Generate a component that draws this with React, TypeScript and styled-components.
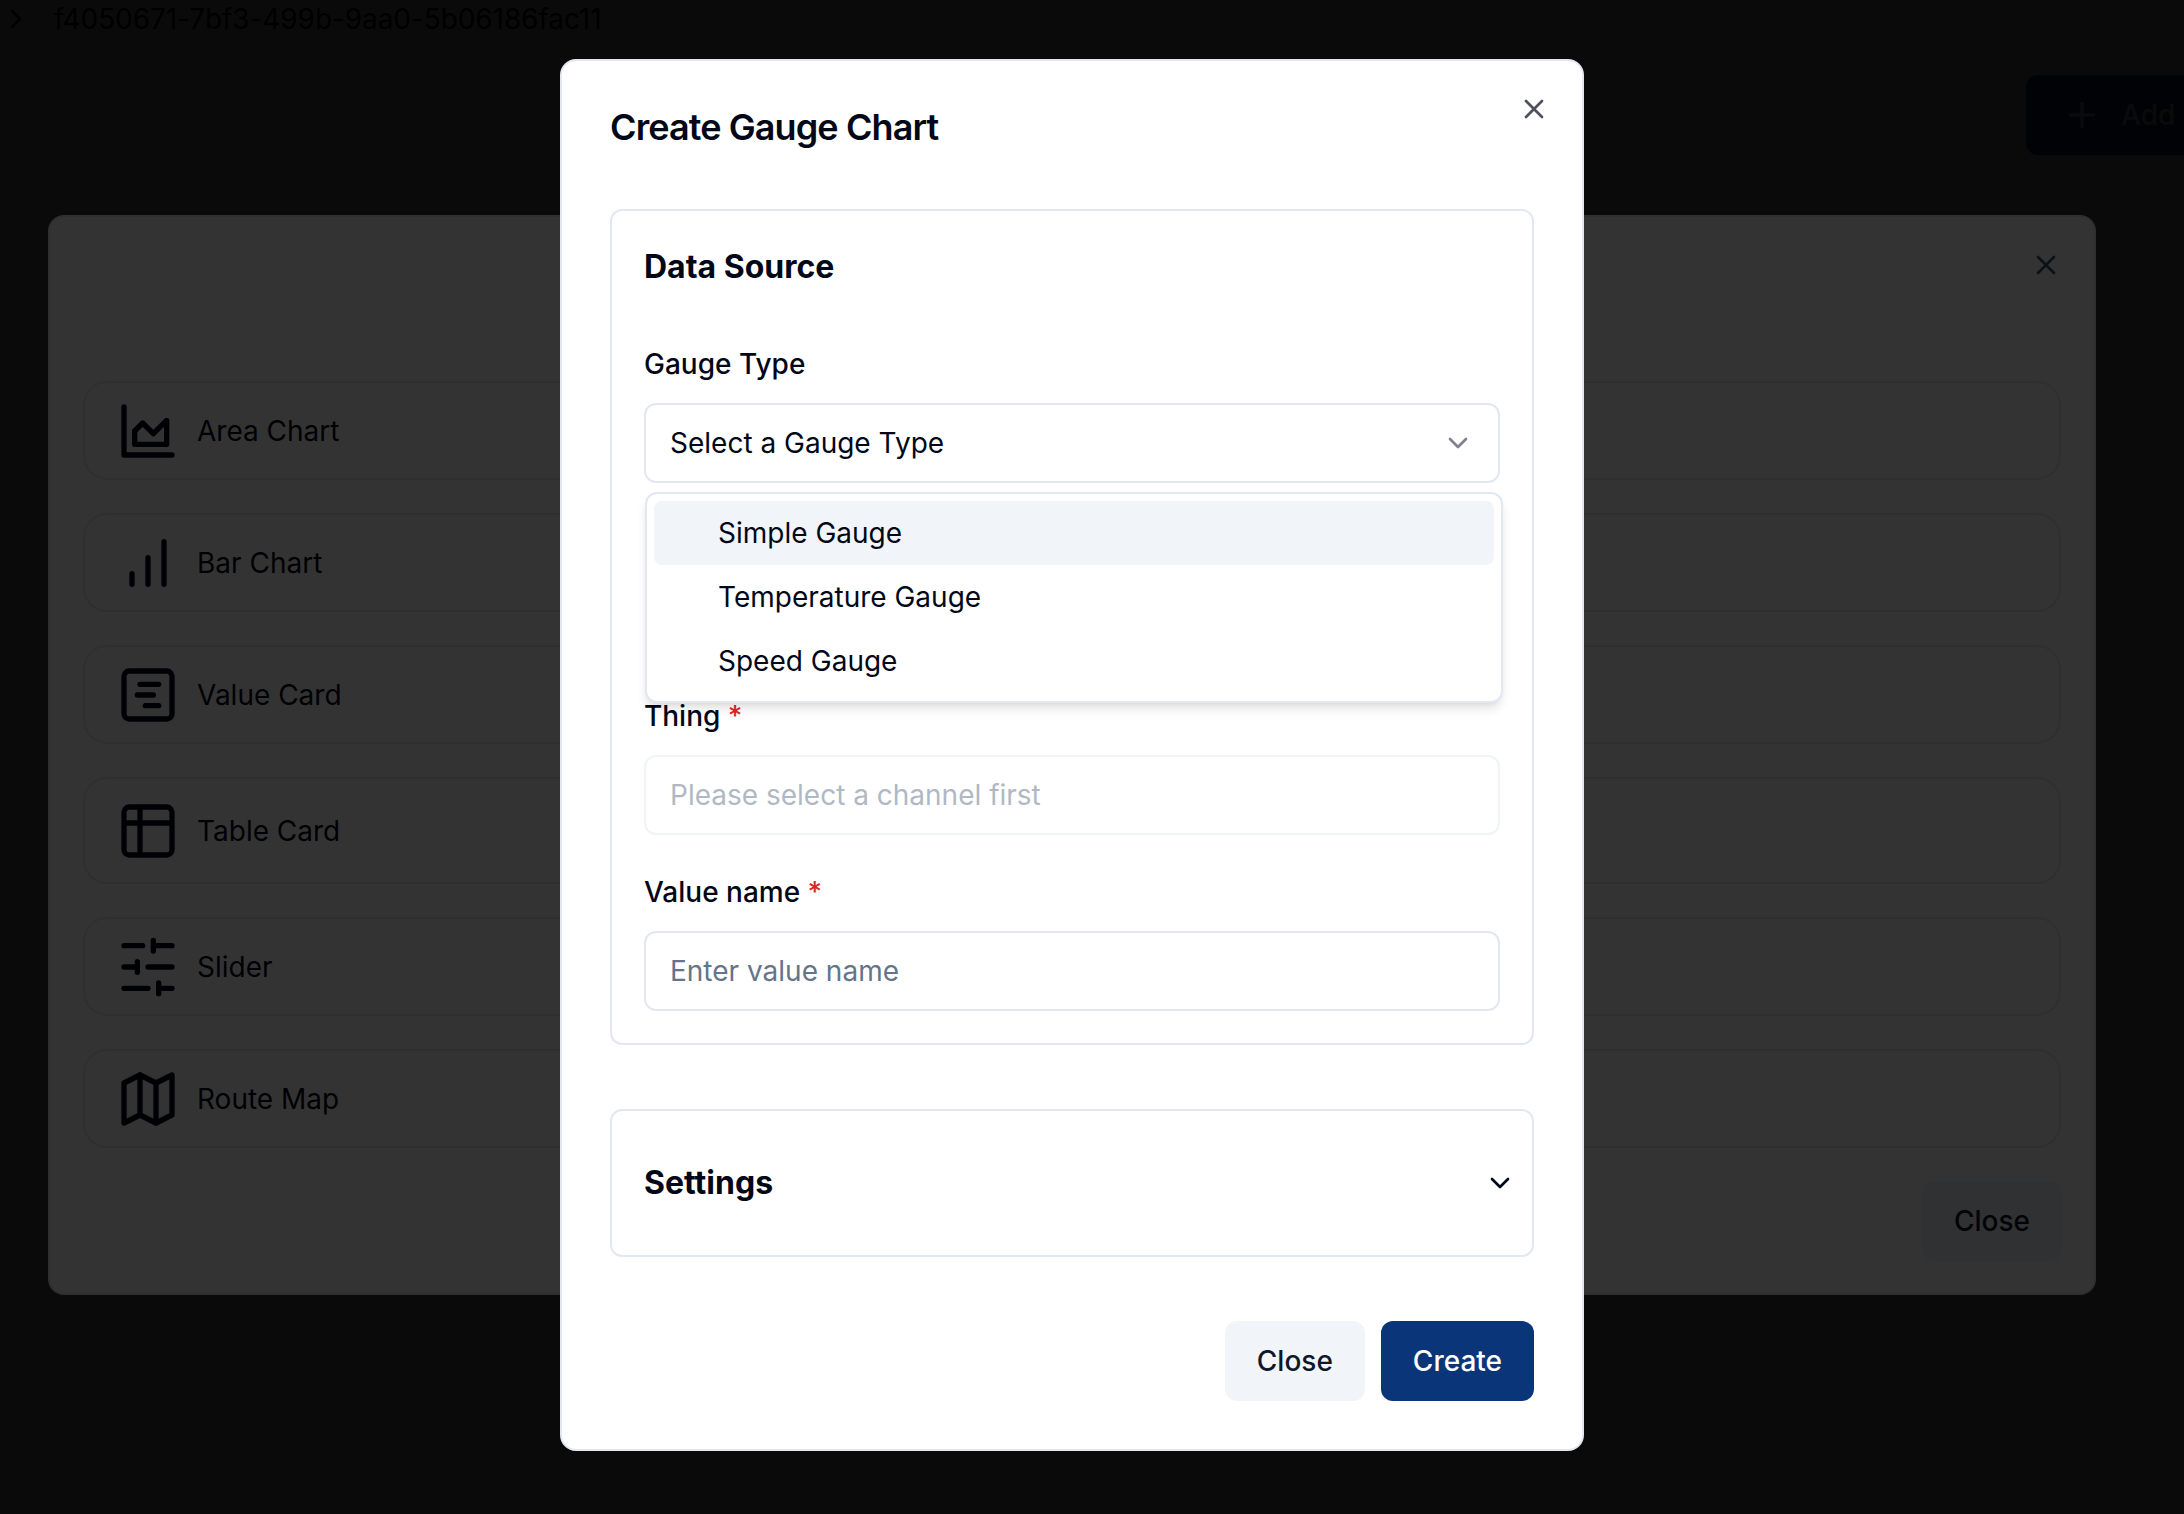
import React from 'react';
import styled, { createGlobalStyle } from 'styled-components';
import { ChevronDown, ChevronRight, Plus, SquareChartGantt, Table2, X } from 'lucide-react';

const AreaChartIcon = () => (
    <IconSvg viewBox="0 0 24 24">
        <path d="M3 3v18h18" />
        <path d="M7 12v5h12V8l-5 5-4-4Z" />
    </IconSvg>
);

const BarChartIcon = () => (
    <IconSvg viewBox="0 0 24 24">
        <path d="M12 20V10" />
        <path d="M18 20V4" />
        <path d="M6 20v-4" />
    </IconSvg>
);

const SliderIcon = () => (
    <IconSvg viewBox="0 0 24 24">
        <path d="M21 4h-7M10 4H3M21 12h-9M8 12H3M21 20h-5M12 20H3M14 2v4M8 10v4M16 18v4" />
    </IconSvg>
);

const MapIcon = () => (
    <IconSvg viewBox="0 0 24 24">
        <path d="M3 6l6-3 6 3 6-3v15l-6 3-6-3-6 3Z" />
        <path d="M9 3v15M15 6v15" />
    </IconSvg>
);

const widgets = [
    { label: 'Area Chart', icon: <AreaChartIcon /> },
    { label: 'Bar Chart', icon: <BarChartIcon /> },
    { label: 'Value Card', icon: <SquareChartGantt size={64} /> },
    { label: 'Table Card', icon: <Table2 size={64} />, tall: true },
    { label: 'Slider', icon: <SliderIcon /> },
    { label: 'Route Map', icon: <MapIcon /> },
];

const gaugeTypes = ['Simple Gauge', 'Temperature Gauge', 'Speed Gauge'];

const App = (): JSX.Element => (
    <>
        <GlobalStyle />
        <Page>
            <TopBar>
                <ChevronRight size={32} />
                <DashboardId>f4050671-7bf3-499b-9aa0-5b06186fac11</DashboardId>
            </TopBar>
            <Toolbar>
                <AddButton>
                    <Plus size={40} />
                    Add
                </AddButton>
            </Toolbar>
        </Page>

        <Backdrop />
        <DialogLayer>
            <WidgetDialog>
                <CloseIcon>
                    <X size={32} />
                </CloseIcon>
                <WidgetList>
                    {widgets.map((widget) => (
                        <WidgetRow key={widget.label} $tall={widget.tall}>
                            {widget.icon}
                            {widget.label}
                        </WidgetRow>
                    ))}
                </WidgetList>
                <WidgetFooter>
                    <SecondaryButton>Close</SecondaryButton>
                </WidgetFooter>
            </WidgetDialog>
        </DialogLayer>

        <Backdrop />
        <DialogLayer>
            <GaugeDialog>
                <CloseIcon>
                    <X size={32} />
                </CloseIcon>
                <DialogTitle>Create Gauge Chart</DialogTitle>
                <SourceCard>
                    <CardTitle>Data Source</CardTitle>
                    <Fields>
                        <Field>
                            <Label>Gauge Type</Label>
                            <SelectBox>
                                Select a Gauge Type
                                <SelectChevron size={32} />
                            </SelectBox>
                            <Dropdown>
                                {gaugeTypes.map((type, index) => (
                                    <DropdownItem key={type} $active={index === 0}>
                                        {type}
                                    </DropdownItem>
                                ))}
                            </Dropdown>
                        </Field>
                        <CoveredField />
                        <Field>
                            <Label>
                                Thing <Required>*</Required>
                            </Label>
                            <TextInput disabled placeholder="Please select a channel first" />
                        </Field>
                        <Field>
                            <Label>
                                Value name <Required>*</Required>
                            </Label>
                            <TextInput placeholder="Enter value name" />
                        </Field>
                    </Fields>
                </SourceCard>
                <SettingsCard>
                    <CardTitle>Settings</CardTitle>
                    <ChevronDown size={32} />
                </SettingsCard>
                <DialogFooter>
                    <SecondaryButton>Close</SecondaryButton>
                    <PrimaryButton>Create</PrimaryButton>
                </DialogFooter>
            </GaugeDialog>
        </DialogLayer>
    </>
);

const GlobalStyle = createGlobalStyle`
    * {
        box-sizing: border-box;
    }

    html,
    body {
        margin: 0;
        height: 100%;
        overflow: hidden;
        background: #fff;
        color: #020817;
        font-family: Inter, 'Liberation Sans', sans-serif;
    }
`;

const Page = styled.main`
    height: 100vh;
    overflow: hidden;
    background: #fff;
`;

const TopBar = styled.div`
    display: flex;
    align-items: center;
    gap: 22px;
    height: 38px;
    font-size: 28px;
    letter-spacing: -0.08px;
`;

const DashboardId = styled.span`
    white-space: nowrap;
`;

const Toolbar = styled.div`
    display: flex;
    padding: 37px 0 0 2026px;
`;

const AddButton = styled.button`
    display: flex;
    align-items: center;
    flex: none;
    gap: 19px;
    width: 240px;
    height: 80px;
    padding: 0 36px;
    border: 0;
    border-radius: 12px;
    background: #0a3679;
    color: #fff;
    font: 500 28px Inter, sans-serif;
`;

const Backdrop = styled.div`
    position: fixed;
    inset: 0;
    background: rgba(0, 0, 0, 0.8);
`;

const DialogLayer = styled.div`
    position: fixed;
    inset: 0;
    display: flex;
    align-items: center;
    justify-content: center;
    padding: 0 40px 4px 0;
`;

const Dialog = styled.section`
    position: relative;
    display: flex;
    flex-direction: column;
    padding: 48px;
    border: 2px solid #e2e8f0;
    border-radius: 16px;
    background: #fff;
`;

const WidgetDialog = styled(Dialog)`
    width: 2048px;
    height: 1080px;
    padding: 164px 33px 33px;
`;

const GaugeDialog = styled(Dialog)`
    width: 1024px;
    height: 1392px;
`;

const CloseIcon = styled.span`
    position: absolute;
    top: 32px;
    right: 32px;
    display: flex;
    color: #020817;
    opacity: 0.7;
`;

const WidgetList = styled.div`
    display: flex;
    flex-direction: column;
    gap: 33px;
`;

const WidgetRow = styled.div<{ $tall?: boolean }>`
    display: flex;
    align-items: center;
    gap: 17px;
    height: ${(props) => (props.$tall ? '107px' : '99px')};
    padding: 0 31px;
    border: 2px solid #e2e8f0;
    border-radius: 24px;
    font-size: 28px;
    line-height: 40px;
`;

const IconSvg = styled.svg`
    flex: none;
    width: 64px;
    height: 64px;
    fill: none;
    stroke: currentColor;
    stroke-width: 2;
    stroke-linecap: round;
    stroke-linejoin: round;
`;

const WidgetFooter = styled.div`
    display: flex;
    justify-content: flex-end;
    margin: auto -1px -1px 0;
`;

const DialogTitle = styled.h2`
    margin: 0 0 64px;
    font-size: 36px;
    font-weight: 600;
    line-height: 36px;
    letter-spacing: -0.9px;
`;

const Card = styled.div`
    border: 2px solid #e2e8f0;
    border-radius: 12px;
`;

const SourceCard = styled(Card)`
    padding: 32px;
`;

const SettingsCard = styled(Card)`
    display: flex;
    align-items: center;
    justify-content: space-between;
    height: 148px;
    margin-top: 64px;
    padding: 0 16px 0 32px;
`;

const CardTitle = styled.h3`
    margin: 0;
    font-size: 32px;
    font-weight: 700;
    line-height: 48px;
`;

const Fields = styled.div`
    display: flex;
    flex-direction: column;
    gap: 37px;
    margin-top: 53px;
`;

const Field = styled.div`
    position: relative;
    display: flex;
    flex-direction: column;
    gap: 19px;
`;

const CoveredField = styled.div`
    height: 139px;
`;

const Label = styled.label`
    font-size: 28px;
    font-weight: 500;
    line-height: 40px;
`;

const Required = styled.span`
    color: #dc2626;
`;

const SelectBox = styled.div`
    display: flex;
    align-items: center;
    justify-content: space-between;
    height: 80px;
    padding: 0 24px;
    border: 2px solid #e2e8f0;
    border-radius: 12px;
    font-size: 28px;
`;

const SelectChevron = styled(ChevronDown)`
    opacity: 0.5;
`;

const Dropdown = styled.div`
    position: absolute;
    top: 148px;
    left: 1px;
    z-index: 2;
    width: 858px;
    height: 211px;
    padding: 7px;
    border: 2px solid #e2e8f0;
    border-radius: 12px;
    background: #fff;
    box-shadow: 0 8px 12px -2px rgba(0, 0, 0, 0.1), 0 3px 6px -3px rgba(0, 0, 0, 0.1);
`;

const DropdownItem = styled.div<{ $active?: boolean }>`
    height: 64px;
    padding-left: 64px;
    border-radius: 8px;
    background: ${(props) => (props.$active ? '#f1f5f9' : 'transparent')};
    font-size: 28px;
    line-height: 64px;
`;

const TextInput = styled.input`
    width: 100%;
    height: 80px;
    padding: 0 24px;
    border: 2px solid #e2e8f0;
    border-radius: 12px;
    background: #fff;
    color: #020817;
    font: 400 28px Inter, sans-serif;

    &::placeholder {
        color: #64748b;
    }

    &:disabled {
        opacity: 0.5;
    }
`;

const DialogFooter = styled.div`
    display: flex;
    justify-content: flex-end;
    gap: 16px;
    margin-top: auto;
`;

const Button = styled.button`
    height: 80px;
    padding: 0 32px;
    border: 0;
    border-radius: 12px;
    font: 500 28px Inter, sans-serif;
`;

const SecondaryButton = styled(Button)`
    background: #f1f5f9;
    color: #0f172a;
`;

const PrimaryButton = styled(Button)`
    background: #0a3679;
    color: #fff;
`;

export default App;
